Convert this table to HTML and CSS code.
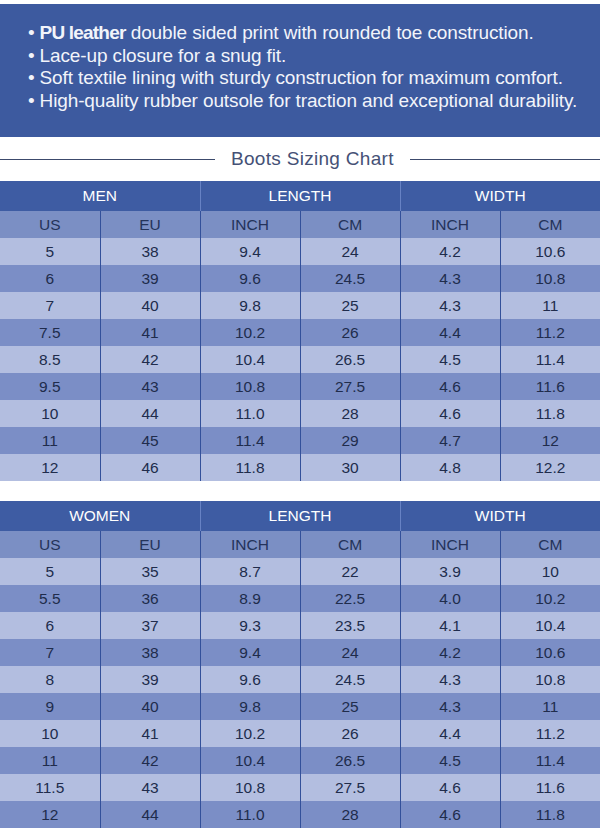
FILE: index.html
```html
<!DOCTYPE html>
<html>
<head>
<meta charset="utf-8">
<link rel="stylesheet" href="styles.css">
</head>
<body>
<div class="page">
  <div class="features">
    <ul>
      <li><b>PU leather</b> double sided print with rounded toe construction.</li>
      <li>Lace-up closure for a snug fit.</li>
      <li>Soft textile lining with sturdy construction for maximum comfort.</li>
      <li>High-quality rubber outsole for traction and exceptional durability.</li>
    </ul>
  </div>
  <div class="title"><span class="line left"></span><span class="title-text">Boots Sizing Chart</span><span class="line right"></span></div>
  <table class="chart">
    <thead>
      <tr class="group"><th colspan="2">MEN</th><th colspan="2">LENGTH</th><th colspan="2">WIDTH</th></tr>
      <tr class="sub"><th>US</th><th>EU</th><th>INCH</th><th>CM</th><th>INCH</th><th>CM</th></tr>
    </thead>
    <tbody>
      <tr class="light"><td>5</td><td>38</td><td>9.4</td><td>24</td><td>4.2</td><td>10.6</td></tr>
      <tr class="dark"><td>6</td><td>39</td><td>9.6</td><td>24.5</td><td>4.3</td><td>10.8</td></tr>
      <tr class="light"><td>7</td><td>40</td><td>9.8</td><td>25</td><td>4.3</td><td>11</td></tr>
      <tr class="dark"><td>7.5</td><td>41</td><td>10.2</td><td>26</td><td>4.4</td><td>11.2</td></tr>
      <tr class="light"><td>8.5</td><td>42</td><td>10.4</td><td>26.5</td><td>4.5</td><td>11.4</td></tr>
      <tr class="dark"><td>9.5</td><td>43</td><td>10.8</td><td>27.5</td><td>4.6</td><td>11.6</td></tr>
      <tr class="light"><td>10</td><td>44</td><td>11.0</td><td>28</td><td>4.6</td><td>11.8</td></tr>
      <tr class="dark"><td>11</td><td>45</td><td>11.4</td><td>29</td><td>4.7</td><td>12</td></tr>
      <tr class="light"><td>12</td><td>46</td><td>11.8</td><td>30</td><td>4.8</td><td>12.2</td></tr>
    </tbody>
  </table>
  <table class="chart women">
    <thead>
      <tr class="group"><th colspan="2">WOMEN</th><th colspan="2">LENGTH</th><th colspan="2">WIDTH</th></tr>
      <tr class="sub"><th>US</th><th>EU</th><th>INCH</th><th>CM</th><th>INCH</th><th>CM</th></tr>
    </thead>
    <tbody>
      <tr class="light"><td>5</td><td>35</td><td>8.7</td><td>22</td><td>3.9</td><td>10</td></tr>
      <tr class="dark"><td>5.5</td><td>36</td><td>8.9</td><td>22.5</td><td>4.0</td><td>10.2</td></tr>
      <tr class="light"><td>6</td><td>37</td><td>9.3</td><td>23.5</td><td>4.1</td><td>10.4</td></tr>
      <tr class="dark"><td>7</td><td>38</td><td>9.4</td><td>24</td><td>4.2</td><td>10.6</td></tr>
      <tr class="light"><td>8</td><td>39</td><td>9.6</td><td>24.5</td><td>4.3</td><td>10.8</td></tr>
      <tr class="dark"><td>9</td><td>40</td><td>9.8</td><td>25</td><td>4.3</td><td>11</td></tr>
      <tr class="light"><td>10</td><td>41</td><td>10.2</td><td>26</td><td>4.4</td><td>11.2</td></tr>
      <tr class="dark"><td>11</td><td>42</td><td>10.4</td><td>26.5</td><td>4.5</td><td>11.4</td></tr>
      <tr class="light"><td>11.5</td><td>43</td><td>10.8</td><td>27.5</td><td>4.6</td><td>11.6</td></tr>
      <tr class="dark"><td>12</td><td>44</td><td>11.0</td><td>28</td><td>4.6</td><td>11.8</td></tr>
    </tbody>
  </table>
</div>
</body>
</html>
```
FILE: styles.css
```css
html, body {
  margin: 0;
  padding: 0;
  background: #ffffff;
}
body {
  font-family: "Liberation Sans", Arial, sans-serif;
  width: 600px;
  height: 828px;
  overflow: hidden;
}
.page {
  padding-top: 4px;
}
.features {
  background: #3d5a9f;
  height: 133px;
  box-sizing: border-box;
  padding-top: 18px;
  color: #f2f4fa;
}
.features ul {
  list-style: none;
  margin: 0;
  padding: 0 0 0 28px;
}
.features li {
  font-size: 19px;
  line-height: 22.5px;
  letter-spacing: -0.12px;
}
.features li::before {
  content: "\2022";
  margin-right: 5px;
}
.features b {
  font-weight: bold;
  letter-spacing: -0.8px;
}
.title {
  height: 44px;
  display: flex;
  align-items: center;
  gap: 16px;
}
.title .line {
  height: 1px;
  background: #3c4a6c;
}
.title .left {
  width: 215px;
}
.title .right {
  flex: 1;
}
.title-text {
  font-size: 19px;
  color: #455176;
  letter-spacing: 0.3px;
}
.chart {
  width: 600px;
  border-collapse: collapse;
  table-layout: fixed;
  font-size: 15.5px;
  text-align: center;
}
.chart.women {
  margin-top: 20px;
}
.chart th, .chart td {
  padding: 0;
  font-weight: normal;
  border-left: 1px solid #33509a;
}
.chart th:first-child, .chart td:first-child {
  border-left: none;
}
.chart .group th {
  background: #3e5ca3;
  color: #ffffff;
  height: 30px;
  border-left-color: #6782c4;
}
.chart .sub th {
  background: #7b8fc4;
  color: #24335a;
  height: 27px;
}
.chart td {
  height: 27px;
  color: #202c4c;
}
.chart .light td {
  background: #b3bee0;
}
.chart .dark td {
  background: #7b8ec6;
}
```
